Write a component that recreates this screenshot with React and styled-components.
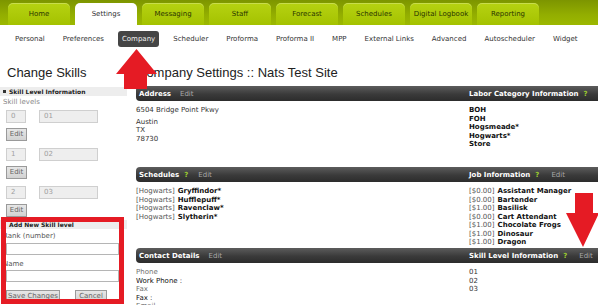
import React from 'react';
import styled, { createGlobalStyle } from 'styled-components';

const Global = createGlobalStyle`
  html, body { margin: 0; padding: 0; background: #fff; }
  body { font-family: "DejaVu Sans", Verdana, sans-serif; font-size: 7px; color: #333; }
`;

const Page = styled.div`
  position: relative;
  width: 598px;
  height: 305px;
  overflow: hidden;
`;

const TopBar = styled.nav`
  height: 25px;
  display: flex;
  align-items: flex-end;
  gap: 5px;
  padding-left: 8px;
  background: linear-gradient(#7d9500, #93ae00 60%, #9cb800);
`;

const Tab = styled.div`
  width: 62px;
  height: 22px;
  border-radius: 5px 5px 0 0;
  display: flex;
  align-items: center;
  justify-content: center;
  font-size: 7px;
  color: ${p => (p.$active ? '#333' : '#2b3600')};
  background: ${p => (p.$active ? '#fff' : 'linear-gradient(#b6d212, #a4c200)')};
  box-shadow: ${p => (p.$active ? 'none' : 'inset 0 1px 0 rgba(255,255,255,0.25)')};
`;

const SubNav = styled.nav`
  height: 27px;
  display: flex;
  align-items: center;
  gap: 10px;
  padding-left: 11px;
`;

const NavItem = styled.div`
  height: 16px;
  line-height: 16px;
  padding: 0 4px;
  border-radius: 3px;
  white-space: nowrap;
  color: ${p => (p.$active ? '#f2f2f2' : '#333')};
  background: ${p => (p.$active ? '#454545' : 'transparent')};
`;

const Body = styled.div`
  display: flex;
  gap: 9px;
  padding-top: 13px;
`;

const Side = styled.aside`
  width: 127px;
  flex: none;
`;

const Title = styled.h1`
  margin: 0;
  font-family: "Liberation Sans", Arial, sans-serif;
  font-weight: normal;
  font-size: 13px;
  line-height: 16px;
  color: #222;
  white-space: nowrap;
  padding-left: ${p => p.$pad || 0}px;
`;

const SubHead = styled.div`
  margin-top: ${p => p.$mt || 0}px;
  height: 9px;
  display: flex;
  align-items: center;
  gap: 3px;
  padding-left: 3px;
  background: #ededed;
  font-size: 6px;
  font-weight: bold;
  color: #222;
  white-space: nowrap;
`;

const Bullet = styled.span`
  width: 3px;
  height: 3px;
  background: #333;
`;

const FieldLabel = styled.div`
  line-height: 9px;
  padding-left: 3px;
  margin-top: ${p => p.$mt || 0}px;
  color: ${p => p.$muted ? '#888' : '#555'};
`;

const SkillList = styled.div`
  display: flex;
  flex-direction: column;
  gap: 7px;
  margin: 3px 0 3px 6px;
`;

const SkillGroup = styled.div`
  display: flex;
  flex-direction: column;
  align-items: flex-start;
  gap: 5px;
`;

const SkillRow = styled.div`
  display: flex;
  gap: 13px;
`;

const ReadBox = styled.div`
  box-sizing: border-box;
  width: ${p => p.$w}px;
  height: 13px;
  line-height: 11px;
  padding-left: 4px;
  border: 1px solid #cfcfcf;
  background: #eeeeee;
  color: #a0a0a0;
`;

const SmallButton = styled.div`
  box-sizing: border-box;
  width: ${p => p.$w || 21}px;
  height: 13px;
  line-height: 11px;
  text-align: center;
  border: 1px solid #9a9a9a;
  background: linear-gradient(#e6e6e6, #d2d2d2);
  color: #666;
  white-space: nowrap;
`;

const TextField = styled.div`
  box-sizing: border-box;
  margin: 1.5px 0 0 6px;
  width: 113px;
  height: 12px;
  border: 1px solid #b5b5b5;
  background: #fff;
`;

const ButtonRow = styled.div`
  display: flex;
  gap: 15px;
  margin: 8px 0 0 6px;
`;

const Main = styled.main`
  flex: 1;
  min-width: 0;
`;

const Sections = styled.div`
  margin-top: 5px;
`;

const HeaderBar = styled.div`
  display: grid;
  grid-template-columns: 333px 1fr;
  height: 15px;
  align-items: center;
  border-radius: 4px 0 0 4px;
  background: linear-gradient(#5c5c5c, #3a3a3a 55%, #2c2c2c);
`;

const HeadCell = styled.div`
  display: flex;
  align-items: center;
  padding-left: ${p => p.$pad || 0}px;
  white-space: nowrap;
`;

const HeadTitle = styled.span`
  font-weight: bold;
  color: #fff;
`;

const Help = styled.span`
  font-weight: bold;
  color: #9ccc2e;
  margin-left: 5px;
`;

const EditLink = styled.span`
  color: #a8a8a8;
  margin-left: ${p => p.$ml || 9}px;
`;

const ContentRow = styled.div`
  display: grid;
  grid-template-columns: 333px 1fr;
  padding-top: 5px;
  min-height: 61px;
`;

const Col = styled.div`
  display: flex;
  flex-direction: column;
`;

const Line = styled.div`
  line-height: 8.5px;
  white-space: nowrap;
  margin-top: ${p => p.$mt || 0}px;
  color: ${p => p.$tone === 'muted' ? '#6f6f6f' : p.$tone === 'dark' ? '#111' : '#333'};
  font-weight: ${p => (p.$bold ? 'bold' : 'normal')};
`;

const Tag = styled.span`
  color: #555;
  margin-right: 3px;
`;

const Strong = styled.b`
  color: #111;
`;

const Arrow = styled.svg`
  position: absolute;
  left: ${p => p.$x}px;
  top: ${p => p.$y}px;
`;

const Callout = styled.div`
  position: absolute;
  left: 1px;
  top: 217px;
  width: 123px;
  height: 87px;
  box-sizing: border-box;
  border: 5px solid #e51b24;
`;

const tabs = ['Home', 'Settings', 'Messaging', 'Staff', 'Forecast', 'Schedules', 'Digital Logbook', 'Reporting'];
const navs = ['Personal', 'Preferences', 'Company', 'Scheduler', 'Proforma', 'Proforma II', 'MPP', 'External Links', 'Advanced', 'Autoscheduler', 'Widget'];
const skills = [['0', '01'], ['1', '02'], ['2', '03']];
const houses = ['Gryffindor*', 'Hufflepuff*', 'Ravenclaw*', 'Slytherin*'];
const jobs = [
  ['$0.00', 'Assistant Manager'],
  ['$0.00', 'Bartender'],
  ['$1.00', 'Basilisk'],
  ['$0.00', 'Cart Attendant'],
  ['$1.00', 'Chocolate Frogs'],
  ['$1.00', 'Dinosaur'],
  ['$1.00', 'Dragon'],
];

function Header({ left, right }) {
  return (
    <HeaderBar>
      <HeadCell $pad={3}>
        <HeadTitle>{left.title}</HeadTitle>
        {left.help && <Help>?</Help>}
        {left.edit && <EditLink $ml={left.help ? 10 : 9}>Edit</EditLink>}
      </HeadCell>
      <HeadCell>
        <HeadTitle>{right.title}</HeadTitle>
        {right.help && <Help>?</Help>}
        {right.edit && <EditLink $ml={12}>Edit</EditLink>}
      </HeadCell>
    </HeaderBar>
  );
}

export default function App() {
  return (
    <Page>
      <Global />
      <TopBar>
        {tabs.map(t => (
          <Tab key={t} $active={t === 'Settings'}>{t}</Tab>
        ))}
      </TopBar>
      <SubNav>
        {navs.map(n => (
          <NavItem key={n} $active={n === 'Company'}>{n}</NavItem>
        ))}
      </SubNav>
      <Body>
        <Side>
          <Title $pad={7}>Change Skills</Title>
          <SubHead $mt={6}><Bullet />Skill Level Information</SubHead>
          <FieldLabel $mt={2} $muted>Skill levels</FieldLabel>
          <SkillList>
            {skills.map(([r, n]) => (
              <SkillGroup key={r}>
                <SkillRow>
                  <ReadBox $w={20}>{r}</ReadBox>
                  <ReadBox $w={59}>{n}</ReadBox>
                </SkillRow>
                <SmallButton>Edit</SmallButton>
              </SkillGroup>
            ))}
          </SkillList>
          <SubHead><Bullet />Add New Skill level</SubHead>
          <FieldLabel $mt={3}>Rank (number)</FieldLabel>
          <TextField />
          <FieldLabel $mt={5}>Name</FieldLabel>
          <TextField />
          <ButtonRow>
            <SmallButton $w={54}>Save Changes</SmallButton>
            <SmallButton $w={32}>Cancel</SmallButton>
          </ButtonRow>
        </Side>
        <Main>
          <Title $pad={1}>Company Settings :: Nats Test Site</Title>
          <Sections>
            <Header left={{ title: 'Address', edit: true }} right={{ title: 'Labor Category Information', help: true }} />
            <ContentRow>
              <Col>
                <Line>6504 Bridge Point Pkwy</Line>
                <Line $mt={3}>Austin</Line>
                <Line>TX</Line>
                <Line>78730</Line>
              </Col>
              <Col>
                {['BOH', 'FOH', 'Hogsmeade*', 'Hogwarts*', 'Store'].map(l => (
                  <Line key={l} $bold $tone="dark">{l}</Line>
                ))}
              </Col>
            </ContentRow>

            <Header left={{ title: 'Schedules', help: true, edit: true }} right={{ title: 'Job Information', help: true, edit: true }} />
            <ContentRow>
              <Col>
                {houses.map(h => (
                  <Line key={h}><Tag>[Hogwarts]</Tag><Strong>{h}</Strong></Line>
                ))}
              </Col>
              <Col>
                {jobs.map(([p, j]) => (
                  <Line key={j}><Tag>[{p}]</Tag><Strong>{j}</Strong></Line>
                ))}
              </Col>
            </ContentRow>

            <Header left={{ title: 'Contact Details', edit: true }} right={{ title: 'Skill Level Information', help: true, edit: true }} />
            <ContentRow>
              <Col>
                <Line $tone="muted">Phone</Line>
                <Line $tone="dark">Work Phone :</Line>
                <Line $tone="muted">Fax</Line>
                <Line $tone="dark">Fax :</Line>
                <Line $tone="muted">Email</Line>
              </Col>
              <Col>
                <Line>01</Line>
                <Line>02</Line>
                <Line>03</Line>
              </Col>
            </ContentRow>
          </Sections>
        </Main>
      </Body>

      <Arrow $x={116} $y={49} width="42" height="40" viewBox="0 0 42 40">
        <polygon points="20.5,0 41,25 31,25 31,40 8,40 8,25 0,25" fill="#e51b24" />
      </Arrow>
      <Arrow $x={565} $y={193} width="34" height="55" viewBox="0 0 34 55">
        <polygon points="10,0 28,0 28,20 34,20 18,54 1,20 10,20" fill="#e51b24" />
      </Arrow>
      <Callout />
    </Page>
  );
}
